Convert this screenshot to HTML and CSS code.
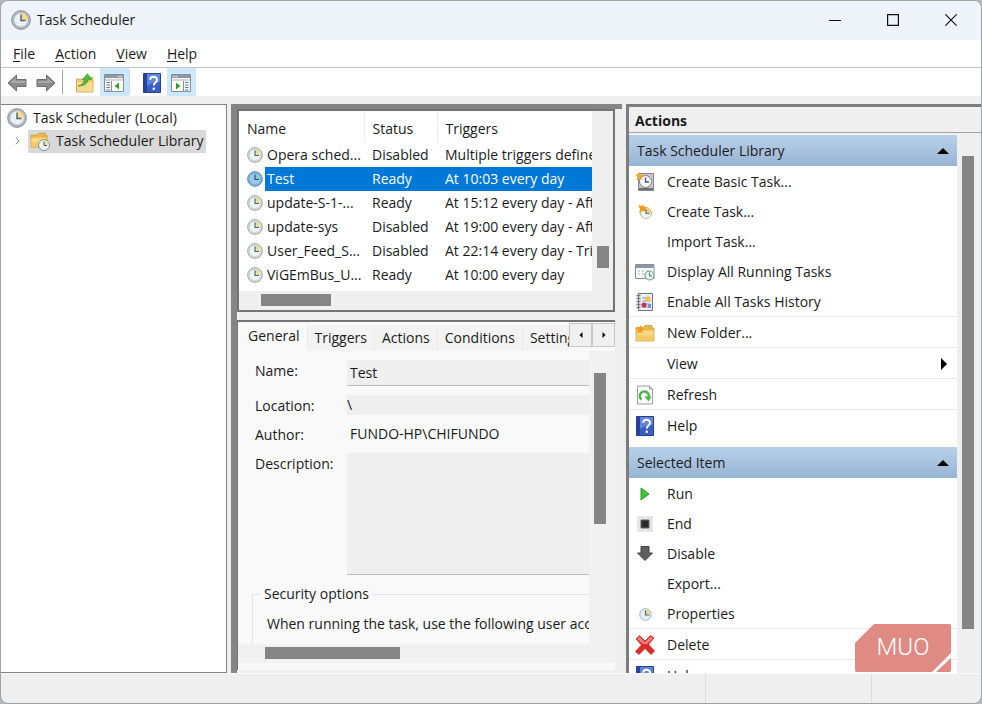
FILE: index.html
```html
<!DOCTYPE html>
<html lang="en">
<head>
  <meta charset="UTF-8" />
  <meta name="viewport" content="width=device-width, initial-scale=1" />
  <title>Task Scheduler</title>
  <link rel="stylesheet" href="styles.css">
</head>
<body>
  <!-- shared icons -->
  <svg class="sprite" aria-hidden="true">
    <symbol id="i-clock" viewBox="0 0 20 20">
      <circle cx="10" cy="10" r="9.3" fill="#b9bec3" stroke="#85898e"/>
      <circle cx="10" cy="10" r="7.2" fill="#e9f1f6" stroke="#a3adb5" stroke-width=".8"/>
      <path d="M10 10V3a7 7 0 0 1 7 7z" fill="#f4dc88"/>
      <path d="M10 4.5V10.5H14.5" fill="none" stroke="#4d5e70" stroke-width="1.4"/>
    </symbol>
    <symbol id="i-task" viewBox="0 0 16 16">
      <circle cx="8" cy="8" r="7.3" fill="#e3e7ea" stroke="#9a9ea3"/>
      <circle cx="8" cy="8" r="5.6" fill="#f1f4f6" stroke="#c3c8cc" stroke-width=".7"/>
      <path d="M8 8V2.4A5.6 5.6 0 0 1 13.6 8z" fill="#dfe596"/>
      <path d="M8 3.5V8.5H12" fill="none" stroke="#53657a" stroke-width="1.2"/>
    </symbol>
    <symbol id="i-task-on" viewBox="0 0 16 16">
      <circle cx="8" cy="8" r="7.3" fill="#8db9dc" stroke="#4f86b4"/>
      <circle cx="8" cy="8" r="5.6" fill="#9ccbee" stroke="#6fa5d0" stroke-width=".7"/>
      <path d="M8 8V2.4A5.6 5.6 0 0 1 13.6 8z" fill="#8fc6c9"/>
      <path d="M8 3.5V8.5H12" fill="none" stroke="#1f4f80" stroke-width="1.2"/>
    </symbol>
    <symbol id="i-help" viewBox="0 0 18 20">
      <path d="M.5.5h17v19H.5z" fill="#3a5fc4" stroke="#2c3f8e"/>
      <path d="M1 1h3v18H1z" fill="#25439c"/>
      <path d="M4 1h13v8Q9 9 4 13z" fill="#5f86dd"/>
      <path d="M7.2 6.8C7.2 2.8 14 2.8 14 6.8 14 9.6 10.8 9.4 10.8 12.6" fill="none" stroke="#fff" stroke-width="2"/>
      <circle cx="10.8" cy="15.8" r="1.3" fill="#fff"/>
    </symbol>
    <symbol id="i-folder" viewBox="0 0 20 20">
      <path d="M1 4.5h7l2-2h7V5h2v13H1z" fill="#e9b847" stroke="#cf9a35" stroke-width=".8"/>
      <path d="M1.5 7.5h17v10h-17z" fill="#fad985"/>
      <path d="M1.5 12.5h17v5h-17z" fill="#f4c864"/>
    </symbol>
    <symbol id="i-arrow" viewBox="0 0 20 18">
      <path d="M1 9 9.500 1v4.500H19v7H9.500V17z" fill="#8b8b8b" stroke="#6f6f6f"/>
      <path d="M3 9l5.500-5v3H18v2z" fill="#a9a9a9"/>
    </symbol>
    <symbol id="i-pane" viewBox="0 0 20 20">
      <path d="M.5 1.500h19v17H.5z" fill="#f6f6f6" stroke="#8b8d90"/>
      <path d="M1 2h18v3H1z" fill="#8c98a6"/>
      <path d="M14 3.500h1.500M16.500 3.500H18" stroke="#fff"/>
      <path d="M1 7h18" stroke="#b2b5b8"/>
      <path d="M7.500 8v10" stroke="#8b8d90"/>
      <path d="M2.500 9.500h3.500M2.500 12h3.500M2.500 14.500h3.500M2.500 17h3.500" stroke="#5d7fb5" stroke-width="1.200"/>
      <path d="M8 8h11v10H8z" fill="#fff"/>
    </symbol>
  </svg>

  <div class="window">
    <header class="titlebar">
      <svg class="icon-lg"><use href="#i-clock"/></svg>
      <h1>Task Scheduler</h1>
      <div class="caption">
        <button aria-label="Minimize"><svg viewBox="0 0 12 12"><path d="M0 6.500h12"/></svg></button>
        <button aria-label="Maximize"><svg viewBox="0 0 12 12"><path d="M.6.6h10.800v10.800H.6z"/></svg></button>
        <button aria-label="Close"><svg viewBox="0 0 12 12"><path d="M.3.3l11.400 11.400M11.700.3L.3 11.700"/></svg></button>
      </div>
    </header>

    <nav class="menubar">
      <button><u>F</u>ile</button>
      <button><u>A</u>ction</button>
      <button><u>V</u>iew</button>
      <button><u>H</u>elp</button>
    </nav>

    <div class="toolbar">
      <button aria-label="Back"><svg width="20" height="18"><use href="#i-arrow"/></svg></button>
      <button aria-label="Forward"><svg class="flip" width="20" height="18"><use href="#i-arrow"/></svg></button>
      <span class="tool-sep dark"></span>
      <button aria-label="Up one level">
        <svg width="20" height="20" viewBox="0 0 20 20">
          <path d="M1.500 6h7l1.500-1.500h8V19h-16.500z" fill="#f3cb6d" stroke="#cfa048" stroke-width=".8"/>
          <path d="M2 9h15.500v9.500H2z" fill="#fadb8c"/>
          <path d="M3 13Q8.500 12 9.500 6.500L7.500 6.500 12.500.8 16.500 6.500H13.500Q12 13 3 13z" fill="#4dbd3f" stroke="#2f8f2a" stroke-width=".7"/>
        </svg>
      </button>
      <button class="on" aria-label="Show console tree">
        <svg width="20" height="20"><use href="#i-pane"/><path d="M15 9.500v7L10.500 13z" fill="#37a02c"/></svg>
      </button>
      <span class="tool-sep"></span>
      <button aria-label="Help"><svg width="18" height="20"><use href="#i-help"/></svg></button>
      <button class="on" aria-label="Show action pane">
        <svg width="20" height="20"><g transform="translate(20 0) scale(-1 1)"><use href="#i-pane" width="20" height="20"/></g><path d="M5 9.500v7L9.500 13z" fill="#37a02c"/></svg>
      </button>
    </div>

    <main class="panes">
      <section class="tree">
        <div class="tree-row">
          <svg class="icon-lg"><use href="#i-clock"/></svg>
          <span class="tree-label">Task Scheduler (Local)</span>
        </div>
        <div class="tree-row child">
          <svg class="chevron" viewBox="0 0 5 8"><path d="M.8.8L4 4 .8 7.200"/></svg>
          <span class="tree-item">
            <svg class="icon-lg" viewBox="0 0 20 20">
              <use href="#i-folder" width="18" height="18"/>
              <circle cx="14" cy="14" r="5.500" fill="#eef3f5" stroke="#7f9097"/>
              <path d="M14 14V9.500a4.500 4.500 0 0 1 4.500 4.500z" fill="#f0e2a0"/>
              <path d="M14 10.500V14.500H17" fill="none" stroke="#3f566a"/>
            </svg>
            Task Scheduler Library
          </span>
        </div>
      </section>

      <section class="middle">
        <div class="task-panel">
          <div class="task-view">
            <table class="tasks">
              <thead>
                <tr><th class="c-name">Name</th><th class="c-status">Status</th><th>Triggers</th></tr>
              </thead>
              <tbody>
                <tr><td><svg class="icon"><use href="#i-task"/></svg><span>Opera sched...</span></td><td>Disabled</td><td>Multiple triggers defined</td></tr>
                <tr class="selected"><td><svg class="icon"><use href="#i-task-on"/></svg><span>Test</span></td><td>Ready</td><td>At 10:03 every day</td></tr>
                <tr><td><svg class="icon"><use href="#i-task"/></svg><span>update-S-1-...</span></td><td>Ready</td><td>At 15:12 every day - After</td></tr>
                <tr><td><svg class="icon"><use href="#i-task"/></svg><span>update-sys</span></td><td>Disabled</td><td>At 19:00 every day - After</td></tr>
                <tr><td><svg class="icon"><use href="#i-task"/></svg><span>User_Feed_S...</span></td><td>Disabled</td><td>At 22:14 every day - Trigger</td></tr>
                <tr><td><svg class="icon"><use href="#i-task"/></svg><span>ViGEmBus_U...</span></td><td>Ready</td><td>At 10:00 every day</td></tr>
              </tbody>
            </table>
          </div>
          <div class="vscroll"><div class="thumb"></div></div>
          <div class="hscroll"><div class="thumb"></div></div>
        </div>

        <div class="detail-panel">
          <div class="tabs">
            <div class="tab-list" role="tablist">
              <button class="tab active" role="tab">General</button>
              <button class="tab" role="tab">Triggers</button>
              <button class="tab" role="tab">Actions</button>
              <button class="tab" role="tab">Conditions</button>
              <button class="tab" role="tab">Settings</button>
            </div>
            <button class="tab-step" aria-label="Previous tabs"><svg viewBox="0 0 4 6"><path d="M3.500 0v6L.5 3z"/></svg></button>
            <button class="tab-step" aria-label="Next tabs"><svg viewBox="0 0 4 6"><path d="M.5 0v6l3-3z"/></svg></button>
          </div>
          <div class="detail-body">
            <form class="general">
              <div class="field">
                <label for="task-name">Name:</label>
                <input class="box lined" id="task-name" type="text" value="Test" readonly>
              </div>
              <div class="field">
                <label for="task-location">Location:</label>
                <input class="box flat" id="task-location" type="text" value="\" readonly>
              </div>
              <div class="field">
                <label for="task-author">Author:</label>
                <input class="box plain" id="task-author" type="text" value="FUNDO-HP\CHIFUNDO" readonly>
              </div>
              <div class="field">
                <label for="task-desc">Description:</label>
                <textarea class="box lined" id="task-desc" readonly></textarea>
              </div>
              <fieldset class="security">
                <legend>Security options</legend>
                <p>When running the task, use the following user account:</p>
              </fieldset>
            </form>
            <div class="vscroll"><div class="thumb"></div></div>
            <div class="hscroll"><div class="thumb"></div></div>
          </div>
        </div>
      </section>

      <aside class="actions">
        <h2>Actions</h2>
        <div class="actions-body">
          <div class="action-list">
            <button class="group">Task Scheduler Library<svg class="tri" viewBox="0 0 12 6"><path d="M6 0l6 6H0z"/></svg></button>
            <button class="action">
              <svg class="icon-lg" viewBox="0 0 20 20">
                <path d="M3.500 1.500h15v17h-15z" fill="#c9c6ca" stroke="#8a858b"/>
                <path d="M4 17h14" stroke="#75706f" stroke-width="2"/>
                <circle cx="10.500" cy="9.500" r="6" fill="#f6f8fa" stroke="#7d8288"/>
                <path d="M10.500 5.500v4.500H14" fill="none" stroke="#46586c" stroke-width="1.300"/>
                <path d="M0 2l3 .8L5 0l.8 3L9 3 6.500 5l1 3L4.500 6.500 1 8.500 2.500 5z" fill="#f5a623"/>
              </svg>
              Create Basic Task...
            </button>
            <button class="action">
              <svg class="icon-lg" viewBox="0 0 20 20">
                <circle cx="11" cy="11" r="5.500" fill="#eef3f6" stroke="#c9b98e"/>
                <path d="M11 11V6.500a5 5 0 0 1 5 4.500z" fill="#f3d06e"/>
                <path d="M11 7v4.500H14.500" fill="none" stroke="#5a7088" stroke-width="1.200"/>
                <path d="M3 3l3 1L8 2.500l.8 2 3.200.5L10 7.500l.5 2L7.500 9 4 11 5 7z" fill="#f29b1d"/>
              </svg>
              Create Task...
            </button>
            <button class="action"><svg class="icon-lg"></svg>Import Task...</button>
            <button class="action">
              <svg class="icon-lg" viewBox="0 0 20 20">
                <path d="M.5 2.500h18.500v14H.5z" fill="#f8f8f8" stroke="#8c9096"/>
                <path d="M1 3h17.500v3H1z" fill="#8a97a6"/>
                <path d="M3 9h2M7 9h2M3 12h2M7 12h2M11 9h2" stroke="#a8b2bd"/>
                <circle cx="14.500" cy="13.500" r="4.500" fill="#e9f3ee" stroke="#6f8f86"/>
                <path d="M14.500 10.500V14H17" fill="none" stroke="#3d8051"/>
              </svg>
              Display All Running Tasks
            </button>
            <button class="action">
              <svg class="icon-lg" viewBox="0 0 20 20">
                <path d="M3.500 1.500h14v17h-14z" fill="#eef2f8" stroke="#6d7380"/>
                <path d="M1.500 3.500h4M1.500 6.500h4M1.500 9.500h4M1.500 12.500h4M1.500 15.500h4" stroke="#757b86" stroke-width="1.500"/>
                <path d="M7.500 6h8M7.500 9h8M7.500 12h8M7.500 15h8" stroke="#6f93d2"/>
                <path d="M13 3l3.500 6h-7z" fill="#f4c92f"/>
                <circle cx="9" cy="13" r="2.600" fill="#c8344f"/>
                <path d="M13 12h3v4h-3z" fill="#6f93d2"/>
              </svg>
              Enable All Tasks History
            </button>
            <button class="action sep">
              <svg class="icon-lg" viewBox="0 0 20 20"><use href="#i-folder" width="20" height="20"/><path d="M1 4l3 .5L6 2l.5 3L9.500 6 7 8l.5 2.500L5 9 2 10.500 3 7z" fill="#f29d22"/></svg>
              New Folder...
            </button>
            <button class="action sep"><svg class="icon-lg"></svg>View<svg class="tri side" viewBox="0 0 6 12"><path d="M0 0l6 6-6 6z"/></svg></button>
            <button class="action sep">
              <svg class="icon-lg" viewBox="0 0 20 20">
                <path d="M2.500 1h12l3 3v15h-15z" fill="#fafafa" stroke="#9b9f9b"/>
                <path d="M14.500 1v3h3" fill="#d8dcd8" stroke="#9b9f9b"/>
                <path d="M6.500 14.500A4.500 4.500 0 1 1 13.500 12.500" fill="none" stroke="#43b649" stroke-width="2.400"/>
                <path d="M9.500 11.500H16.500L13.500 16.500z" fill="#43b649"/>
              </svg>
              Refresh
            </button>
            <button class="action sep"><svg class="icon-lg"><use href="#i-help"/></svg>Help</button>
            <button class="group second">Selected Item<svg class="tri" viewBox="0 0 12 6"><path d="M6 0l6 6H0z"/></svg></button>
            <button class="action">
              <svg class="icon-lg" viewBox="0 0 20 20"><path d="M6 4l8 6-8 6z" fill="#42c135" stroke="#2f9a28"/></svg>
              Run
            </button>
            <button class="action">
              <svg class="icon-lg" viewBox="0 0 20 20"><path d="M2 2h16v16H2z" fill="#e6e6e6"/><path d="M6 6h8v8H6z" fill="#2c2c2c" stroke="#666"/></svg>
              End
            </button>
            <button class="action">
              <svg class="icon-lg" viewBox="0 0 20 20"><path d="M6 2.500h8V9h3.500L10 16.500 2.500 9H6z" fill="#5f5f5f" stroke="#444"/></svg>
              Disable
            </button>
            <button class="action"><svg class="icon-lg"></svg>Export...</button>
            <button class="action">
              <svg class="icon-lg" viewBox="0 0 20 20">
                <circle cx="10.500" cy="10.500" r="5.800" fill="#e3edf5" stroke="#a7b6c3"/>
                <path d="M10.500 10.500V5.500a5 5 0 0 1 5 5z" fill="#f2d98a"/>
                <path d="M10.500 6.500V11H14.500" fill="none" stroke="#4d6b86" stroke-width="1.200"/>
              </svg>
              Properties
            </button>
            <button class="action sep">
              <svg class="icon-lg" viewBox="0 0 20 20">
                <path d="M1 4L4.500.5 10 6 15.500.5 19 3 13.500 9.500 19.500 16 16 19.500 10 13.500 4 19.500.5 16.500 6.500 10z" fill="#e02a2a" stroke="#b32020" stroke-width=".7"/>
                <path d="M2 4L4.500 1.500 10 7.500 15.500 1.500 18 3.500 12 9H8z" fill="#f08080"/>
              </svg>
              Delete
            </button>
            <button class="action sep"><svg class="icon-lg"><use href="#i-help"/></svg>Help</button>
          </div>
          <div class="vscroll"><div class="thumb"></div></div>
        </div>
      </aside>
    </main>

    <footer class="statusbar"><span></span><span></span><span></span></footer>

    <div class="badge">
      <svg viewBox="0 0 96 48" aria-hidden="true">
        <path d="M19 0h75q2 0 2 2v27L77 48H2q-2 0-2-2V19z"/>
        <path d="M96 34v12q0 2-2 2H81z"/>
      </svg>
      <span>MUO</span>
    </div>
  </div>
</body>
</html>
```
FILE: styles.css
```css
* {
  box-sizing: border-box;
}
body {
  margin: 0;
  background: #b4b6b8;
  color: #1b1b1b;
  font-family: "Open Sans", "Noto Sans", sans-serif;
  font-size: 14px;
  line-height: 20px;
}
button, input, textarea {
  margin: 0;
  padding: 0;
  border: 0;
  background: none;
  color: inherit;
  font: inherit;
}
svg {
  display: block;
  flex: none;
}
.sprite {
  position: absolute;
  width: 0;
  height: 0;
}
.icon-lg {
  width: 20px;
  height: 20px;
}
.icon {
  width: 16px;
  height: 16px;
}

.window {
  position: relative;
  display: flex;
  flex-direction: column;
  height: 100vh;
  border: 1px solid #a0a2a4;
  border-radius: 8px;
  background: #efefef;
  overflow: hidden;
}

/* title bar */
.titlebar {
  display: flex;
  align-items: center;
  height: 39px;
  padding: 0 1px 2px 10px;
  gap: 6px;
  background: #eff3fa;
}
.titlebar h1 {
  margin: 0;
  font-size: 14px;
  font-weight: normal;
}
.caption {
  display: flex;
  margin-left: auto;
}
.caption button {
  display: grid;
  place-items: center;
  width: 58px;
  height: 36px;
}
.caption svg {
  width: 12px;
  height: 12px;
  fill: none;
  stroke: #111;
  stroke-width: 1.2;
}

/* menu + toolbar */
.menubar {
  display: flex;
  gap: 20px;
  padding: 4px 12px 3px;
  background: #fff;
  border-bottom: 1px solid #c4c4c4;
}
.menubar u {
  text-underline-offset: 2px;
}
.toolbar {
  display: flex;
  align-items: center;
  height: 28px;
  padding-left: 2px;
  background: #fff;
}
.toolbar button {
  display: grid;
  place-items: center;
  width: 29px;
  height: 28px;
  padding: 2px 1px 0 0;
}
.toolbar .on {
  background: #cce8ff;
}
.flip {
  transform: scaleX(-1);
}
.tool-sep {
  width: 1px;
  height: 24px;
  margin-right: 8px;
  background: #d5d5d5;
}
.tool-sep.dark {
  background: #a0a0a0;
  margin-left: 1px;
}

/* three panes */
.panes {
  display: grid;
  grid-template-columns: 226px minmax(0, 5fr) minmax(0, 355px);
  grid-template-rows: minmax(0, 1fr);
  gap: 4px;
  flex: 1;
  min-height: 0;
  padding-top: 8px;
}
.thumb {
  background: #858585;
}
.tree {
  padding: 3px 6px;
  background: #fff;
  border: 1px solid #828282;
  border-left: 0;
}
.tree-row {
  display: flex;
  align-items: center;
  gap: 6px;
}
.tree-row.child {
  padding-left: 8px;
}
.chevron {
  width: 5px;
  height: 8px;
  fill: none;
  stroke: #8a8a8a;
}
.tree-item {
  display: flex;
  align-items: center;
  gap: 6px;
  margin: 2px 0 0 2px;
  padding: 1px 2px 2px;
  background: #d9d9d9;
  white-space: nowrap;
}

.middle {
  display: flex;
  flex-direction: column;
  gap: 8px;
  min-width: 0;
  padding-right: 7px;
  padding-bottom: 3px;
  border-top: 5px solid #858585;
  border-left: 6px solid #858585;
}
.task-panel {
  display: grid;
  grid-template-columns: minmax(0, 1fr) 21px;
  border: 2px solid #747474;
  background: #efefef;
}
.task-view {
  overflow: hidden;
  padding-bottom: 4px;
  background: #fff;
}
.tasks {
  width: 460px;
  table-layout: fixed;
  border-collapse: collapse;
}
.tasks th {
  height: 32px;
  padding: 3px 0 0 8px;
  border-right: 1px solid #ececec;
  font-weight: normal;
  text-align: left;
}
.tasks .c-name {
  width: 125px;
}
.tasks .c-status {
  width: 73px;
}
.tasks td {
  height: 24px;
  padding: 0 0 0 8px;
  white-space: nowrap;
}
.tasks td:first-child {
  display: flex;
  align-items: center;
  gap: 2px;
}
.tasks td:first-child span {
  flex: 1;
  padding: 2px 0 2px 2px;
}
.tasks .selected td:not(:first-child),
.tasks .selected span {
  background: #0078d7;
  color: #fff;
}
.task-panel .vscroll {
  display: flex;
  flex-direction: column;
  justify-content: flex-end;
  padding: 0 4px 23px 5px;
}
.task-panel .vscroll .thumb {
  height: 22px;
}
.hscroll {
  grid-column: 1 / -1;
  height: 19px;
  padding: 3px 22px;
}
.hscroll .thumb {
  height: 12px;
}
.task-panel .hscroll .thumb {
  width: 70px;
}

.detail-panel {
  display: flex;
  flex-direction: column;
  flex: 1;
  min-height: 0;
  border-top: 2px solid #747474;
  border-left: 1px solid #747474;
  background: #f9f9f9;
}
.tabs {
  display: flex;
  align-items: flex-start;
  padding-left: 3px;
}
.tab-list {
  display: flex;
  flex: 1;
  min-width: 0;
  overflow: hidden;
}
.tab {
  flex: none;
  height: 26px;
  margin-top: 3px;
  padding: 0 7px;
  background: #f3f3f3;
  border-right: 1px solid #ebebeb;
}
.tab.active {
  height: 28px;
  margin-top: 0;
  background: #f9f9f9;
}
.tab-step {
  display: grid;
  place-items: center;
  width: 23px;
  height: 24px;
  margin-top: 1px;
  background: #f0f0f0;
  border: 1px solid #c9c9c9;
}
.tab-step svg {
  width: 4px;
  height: 6px;
}
.detail-body {
  display: grid;
  grid-template-columns: minmax(0, 1fr) 26px;
  grid-template-rows: minmax(0, 1fr) 20px;
  flex: 1;
  min-height: 0;
  margin-bottom: 6px;
}
.general {
  overflow: hidden;
  padding: 9px 0 0 17px;
}
.field {
  display: grid;
  grid-template-columns: 92px minmax(0, 1fr);
  align-items: start;
}
.field label {
  padding-top: 1px;
}
.box {
  display: block;
  width: 100%;
  height: 26px;
  margin-bottom: 9px;
  padding-left: 3px;
  background: #efefef;
  resize: none;
}
.lined {
  border-bottom: 1px solid #bdbdbd;
}
.flat {
  height: 20px;
  padding-left: 0;
}
.plain {
  height: 20px;
  background: none;
}
textarea.box {
  height: 122px;
}
.security {
  min-width: 0;
  margin: 0 0 0 -3px;
  padding: 10px 14px 20px;
  border: 1px solid #e3e3e3;
  border-right: 0;
  white-space: nowrap;
}
.security legend {
  margin-left: -7px;
  padding: 0 4px;
}
.security p {
  margin: 0;
}
.detail-body .vscroll {
  padding: 22px 9px 0 5px;
  background: #f1f1f1;
}
.detail-body .vscroll .thumb {
  height: 151px;
}
.detail-body .hscroll {
  padding-left: 27px;
  background: #f1f1f1;
}
.detail-body .hscroll .thumb {
  width: 135px;
}

/* actions pane */
.actions {
  display: flex;
  flex-direction: column;
  min-width: 0;
  min-height: 0;
  border-top: 3px solid #7c7c7c;
  border-left: 3px solid #7c7c7c;
}
.actions h2 {
  margin: 0 0 2px;
  padding: 4px 6px 1px;
  border-bottom: 1px solid #a5a5a5;
  font-size: 14px;
  font-weight: bold;
}
.actions-body {
  display: grid;
  grid-template-columns: minmax(0, 1fr) 24px;
  grid-template-rows: minmax(0, 1fr);
  flex: 1;
  min-height: 0;
}
.action-list {
  overflow: hidden;
  background: #fff;
}
.group {
  display: flex;
  align-items: center;
  justify-content: space-between;
  width: 100%;
  height: 31px;
  padding: 1px 8px 0;
  background: linear-gradient(#b9d1ea, #98b4d4);
}
.group.second {
  margin-top: 7px;
}
.tri {
  width: 12px;
  height: 6px;
}
.tri.side {
  width: 6px;
  height: 12px;
  margin-left: auto;
}
.action {
  display: flex;
  align-items: center;
  gap: 12px;
  width: 100%;
  height: 30px;
  padding: 1px 10px 0 6px;
}
.action.sep {
  height: 31px;
  border-top: 1px solid #e8e8e8;
}
.actions .vscroll {
  padding: 21px 7px 0 5px;
}
.actions .vscroll .thumb {
  height: 91.5%;
}

.statusbar {
  display: grid;
  grid-template-columns: minmax(0, 1fr) 166px 110px;
  flex: none;
  height: 30px;
  border-top: 1px solid #fafafa;
}
.statusbar span + span {
  border-left: 1px solid #dcdcdc;
}

.badge {
  position: absolute;
  right: 30px;
  bottom: 31px;
  width: 96px;
  height: 48px;
}
.badge svg {
  fill: #e08a84;
}
.badge span {
  position: absolute;
  inset: 0;
  color: #fff;
  font: 300 24px/46px Roboto, sans-serif;
  text-align: center;
}
```
